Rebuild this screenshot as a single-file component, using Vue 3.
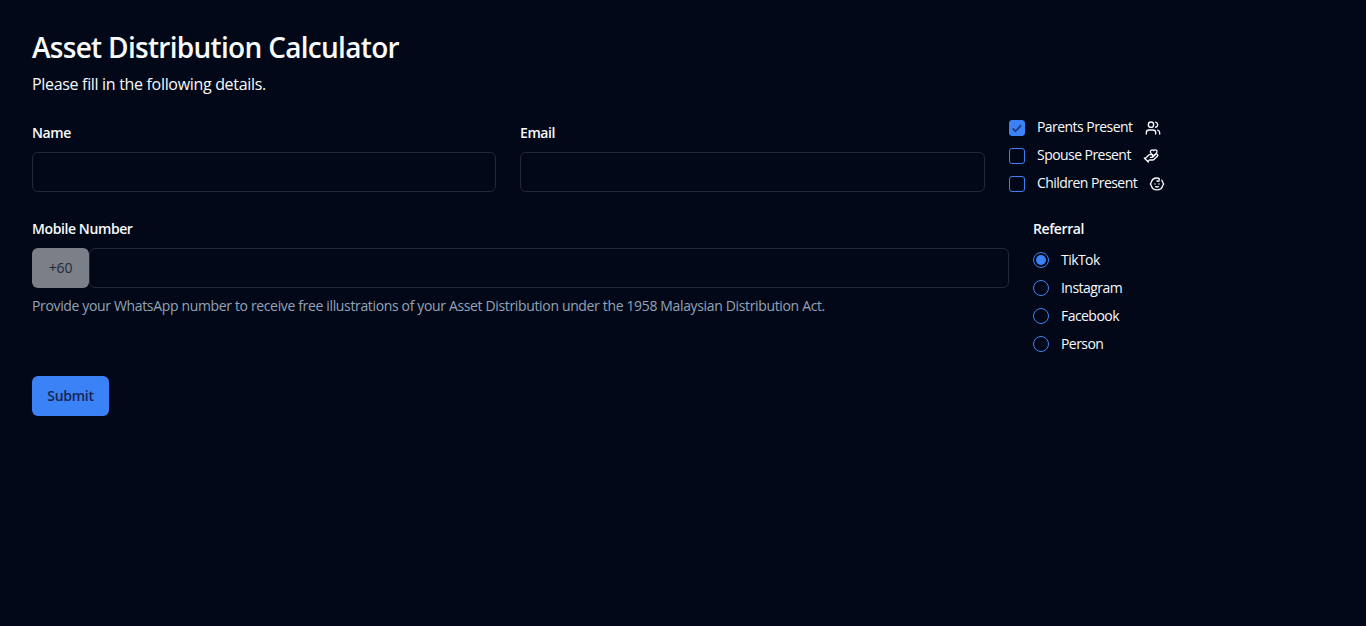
<script setup>
const checks = [
  { label: 'Parents Present', on: true, icon: 'parents' },
  { label: 'Spouse Present', on: false, icon: 'spouse' },
  { label: 'Children Present', on: false, icon: 'child' },
]
const referrals = ['TikTok', 'Instagram', 'Facebook', 'Person']
</script>

<template>
  <main class="page">
    <h1 class="title">Asset Distribution Calculator</h1>
    <p class="subtitle">Please fill in the following details.</p>

    <div class="row first">
      <div class="field">
        <label class="label">Name</label>
        <input class="input" type="text" />
      </div>
      <div class="field">
        <label class="label">Email</label>
        <input class="input" type="text" />
      </div>
      <div class="checks">
        <div v-for="c in checks" :key="c.label" class="option">
          <span class="box" :class="{ on: c.on }">
            <svg v-if="c.on" viewBox="0 0 16 16" class="tick"><path d="M3 8.5l3.2 3.2 6.6-7" /></svg>
          </span>
          <span class="text">{{ c.label }}</span>
          <svg class="icon" viewBox="0 0 24 24">
            <template v-if="c.icon === 'parents'">
              <path d="M16 21v-2a4 4 0 0 0-4-4H6a4 4 0 0 0-4 4v2" />
              <circle cx="9" cy="7" r="4" />
              <path d="M22 21v-2a4 4 0 0 0-3-3.87" />
              <path d="M16 3.13a4 4 0 0 1 0 7.75" />
            </template>
            <template v-else-if="c.icon === 'spouse'">
              <path d="M11 14h2a2 2 0 1 0 0-4h-3c-.6 0-1.1.2-1.4.6L3 16" />
              <path d="m7 20 1.6-1.4c.3-.4.8-.6 1.4-.6h4c1.1 0 2.1-.4 2.8-1.2l4.6-4.4a2 2 0 0 0-2.75-2.91l-4.2 3.9" />
              <path d="m2 15 6 6" />
              <path d="M19.5 8.5c.7-.7 1.5-1.6 1.5-2.7A2.73 2.73 0 0 0 16 4a2.78 2.78 0 0 0-5 1.8c0 1.2.8 2 1.5 2.8L16 12Z" />
            </template>
            <template v-else>
              <path d="M9 12h.01" />
              <path d="M15 12h.01" />
              <path d="M10 16c.5.3 1.2.5 2 .5s1.5-.2 2-.5" />
              <path d="M19 6.3a9 9 0 0 1 1.8 3.9 2 2 0 0 1 0 3.6 9 9 0 0 1-17.6 0 2 2 0 0 1 0-3.6A9 9 0 0 1 12 3c2 0 3.5 1.1 3.5 2.5s-.9 2.5-2 2.5c-.8 0-1.5-.4-1.5-1" />
            </template>
          </svg>
        </div>
      </div>
    </div>

    <div class="row second">
      <div class="field mobile">
        <label class="label">Mobile Number</label>
        <div class="phone">
          <span class="prefix">+60</span>
          <input class="input grow" type="text" />
        </div>
        <p class="hint">Provide your WhatsApp number to receive free illustrations of your Asset Distribution under the 1958 Malaysian Distribution Act.</p>
      </div>
      <div class="referral">
        <label class="label">Referral</label>
        <div class="radios">
          <div v-for="(r, i) in referrals" :key="r" class="option">
            <span class="radio" :class="{ on: i === 0 }"></span>
            <span class="text">{{ r }}</span>
          </div>
        </div>
      </div>
    </div>

    <button class="submit" type="button">Submit</button>
  </main>
</template>

<style>
html, body { margin: 0; background: #020817; }
</style>

<style scoped>
.page {
  box-sizing: border-box;
  min-height: 626px;
  padding: 31px 32px 32px;
  background: #020817;
  color: #f8fafc;
  font-family: "Open Sans", "Noto Sans", sans-serif;
}
.title { margin: 0; font-size: 28px; line-height: 32px; font-weight: 600; letter-spacing: -0.7px; }
.subtitle { margin: 9px 0 0; font-size: 16px; line-height: 24px; letter-spacing: -0.32px; }
.row { display: flex; gap: 24px; }
.first { margin-top: 24px; display: grid; grid-template-columns: 464px 465px auto; justify-content: start; }
.second { margin-top: 24px; }
.field { display: flex; flex-direction: column; }
.mobile { width: 977px; flex: none; }
.label { font-size: 14px; line-height: 14px; font-weight: 600; margin-top: 6px; letter-spacing: -0.4px; }
.input {
  box-sizing: border-box;
  display: block;
  width: 100%;
  height: 40px;
  margin-top: 12px;
  background: transparent;
  border: 1px solid #1e293b;
  border-radius: 6px;
}
.phone { display: flex; margin-top: 12px; }
.prefix {
  box-sizing: border-box;
  width: 57px;
  height: 40px;
  padding-bottom: 2px;
  display: flex;
  align-items: center;
  justify-content: center;
  border-radius: 6px;
  background: #7b7f88;
  color: #1e293b;
  font-size: 14px;
  letter-spacing: -0.2px;
  flex: none;
}
.grow { flex: 1; margin-top: 0; }
.hint { margin: 8px 0 0; font-size: 14px; line-height: 20px; color: #94a3b8; letter-spacing: -0.35px; white-space: nowrap; }
.checks { display: flex; flex-direction: column; gap: 8px; margin-top: -3px; margin-bottom: -1px; }
.option { display: flex; align-items: center; height: 20px; font-size: 14px; letter-spacing: -0.55px; }
.text { line-height: 20px; }
.box {
  box-sizing: border-box;
  width: 16px;
  height: 16px;
  margin-top: 2px;
  border: 1px solid #3b82f6;
  border-radius: 3px;
  margin-right: 12px;
  flex: none;
}
.box.on { background: #3b82f6; }
.tick { display: block; width: 14px; height: 14px; fill: none; stroke: #1e3a8a; stroke-width: 2; }
.icon {
  width: 16px;
  height: 16px;
  margin-left: 12px;
  margin-top: 2px;
  fill: none;
  stroke: #f8fafc;
  stroke-width: 2;
  stroke-linecap: round;
  stroke-linejoin: round;
}
.referral { display: flex; flex-direction: column; }
.radios { display: flex; flex-direction: column; gap: 8px; margin-top: 14px; }
.radio {
  box-sizing: border-box;
  width: 16px;
  height: 16px;
  border: 1px solid #3b82f6;
  border-radius: 50%;
  margin-right: 12px;
  flex: none;
  display: flex;
  align-items: center;
  justify-content: center;
}
.radio.on::after { content: ""; width: 10px; height: 10px; border-radius: 50%; background: #3b82f6; }
.submit {
  display: block;
  margin-top: 22px;
  width: 77px;
  height: 40px;
  border: 0;
  border-radius: 6px;
  background: #3b82f6;
  color: #172554;
  font: 600 14px "Open Sans", "Noto Sans", sans-serif;
  letter-spacing: -0.3px;
  padding: 0 0 2px;
}
</style>
